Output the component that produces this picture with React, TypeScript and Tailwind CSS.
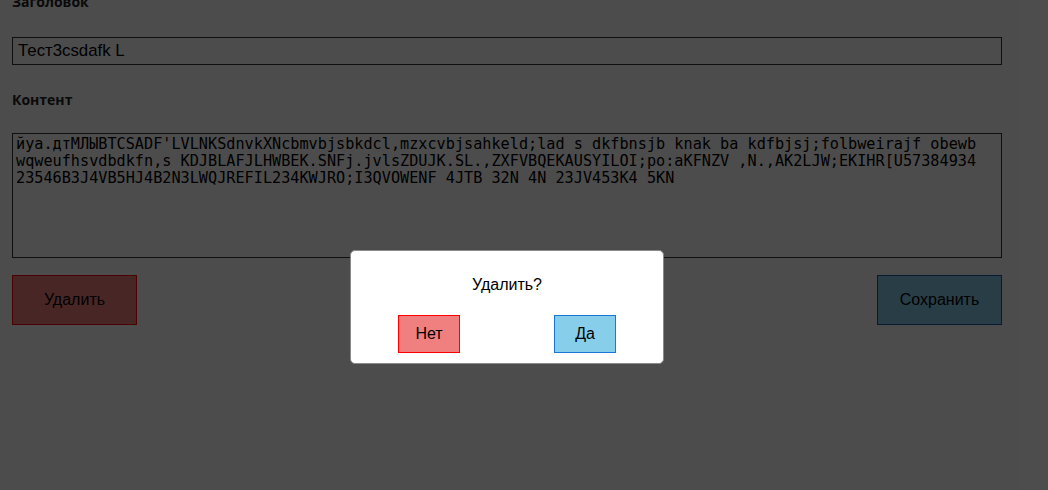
import React from "react";

const longText =
  "йуа.дтМЛЫBTCSADF'LVLNKSdnvkXNcbmvbjsbkdcl,mzxcvbjsahkeld;lad s dkfbnsjb knak ba kdfbjsj;folbweirajf obewb wqweufhsvdbdkfn,s KDJBLAFJLHWBEK.SNFj.jvlsZDUJK.SL.,ZXFVBQEKAUSYILOI;po:aKFNZV ,N.,AK2LJW;EKIHR[U57384934 23546B3J4VB5HJ4B2N3LWQJREFIL234KWJRO;I3QVOWENF 4JTB 32N 4N 23JV453K4 5KN";

export default function App() {
  return (
    <div className="relative h-[490px] w-[1048px] overflow-hidden bg-white">
      <div className="ml-[12px] mt-[-8px] flex w-[990px] flex-col">
        <div className="h-[20px] font-['Open_Sans',sans-serif] text-[14px] font-bold leading-[20px] text-[#222]">
          Заголовок
        </div>
        <input
          readOnly
          value="Тест3csdafk L"
          className="mt-[25px] h-[28px] w-full border border-[#333] px-[5px] font-['Liberation_Sans',Arial,sans-serif] text-[16.8px] text-black outline-none"
        />
        <div className="mt-[25px] h-[20px] font-['Open_Sans',sans-serif] text-[14px] font-bold leading-[20px] text-[#222]">
          Контент
        </div>
        <textarea
          readOnly
          value={longText}
          className="mt-[23px] h-[125px] w-full resize-none border border-[#333] px-[3px] py-[2px] font-['DejaVu_Sans_Mono',monospace] text-[15.2px] leading-[17px] text-black outline-none"
        />
        <div className="mt-[17px] flex justify-between">
          <button className="flex h-[50px] w-[125px] items-center justify-center border border-[#ff0000] bg-[#f08080] font-['Liberation_Sans',Arial,sans-serif] text-[16px] text-black">
            Удалить
          </button>
          <button className="flex h-[50px] w-[125px] items-center justify-center border border-[#1a5aa0] bg-[#87ceeb] font-['Liberation_Sans',Arial,sans-serif] text-[16px] text-black">
            Сохранить
          </button>
        </div>
      </div>

      <div className="absolute inset-0 bg-black/70" />

      <div className="absolute left-[350px] top-[250px] flex h-[114px] w-[314px] flex-col items-center rounded-[5px] border border-[#8a8a8a] bg-white font-['Liberation_Sans',Arial,sans-serif] text-black">
        <div className="mt-[25px] h-[18px] text-[16px] leading-[18px]">Удалить?</div>
        <div className="mt-[21px] flex w-full justify-around">
          <button className="flex h-[38px] w-[62px] items-center justify-center border border-[#ff0000] bg-[#f08080] text-[16px]">
            Нет
          </button>
          <button className="flex h-[38px] w-[62px] items-center justify-center border border-[#1976d2] bg-[#87ceeb] text-[16px]">
            Да
          </button>
        </div>
      </div>
    </div>
  );
}
